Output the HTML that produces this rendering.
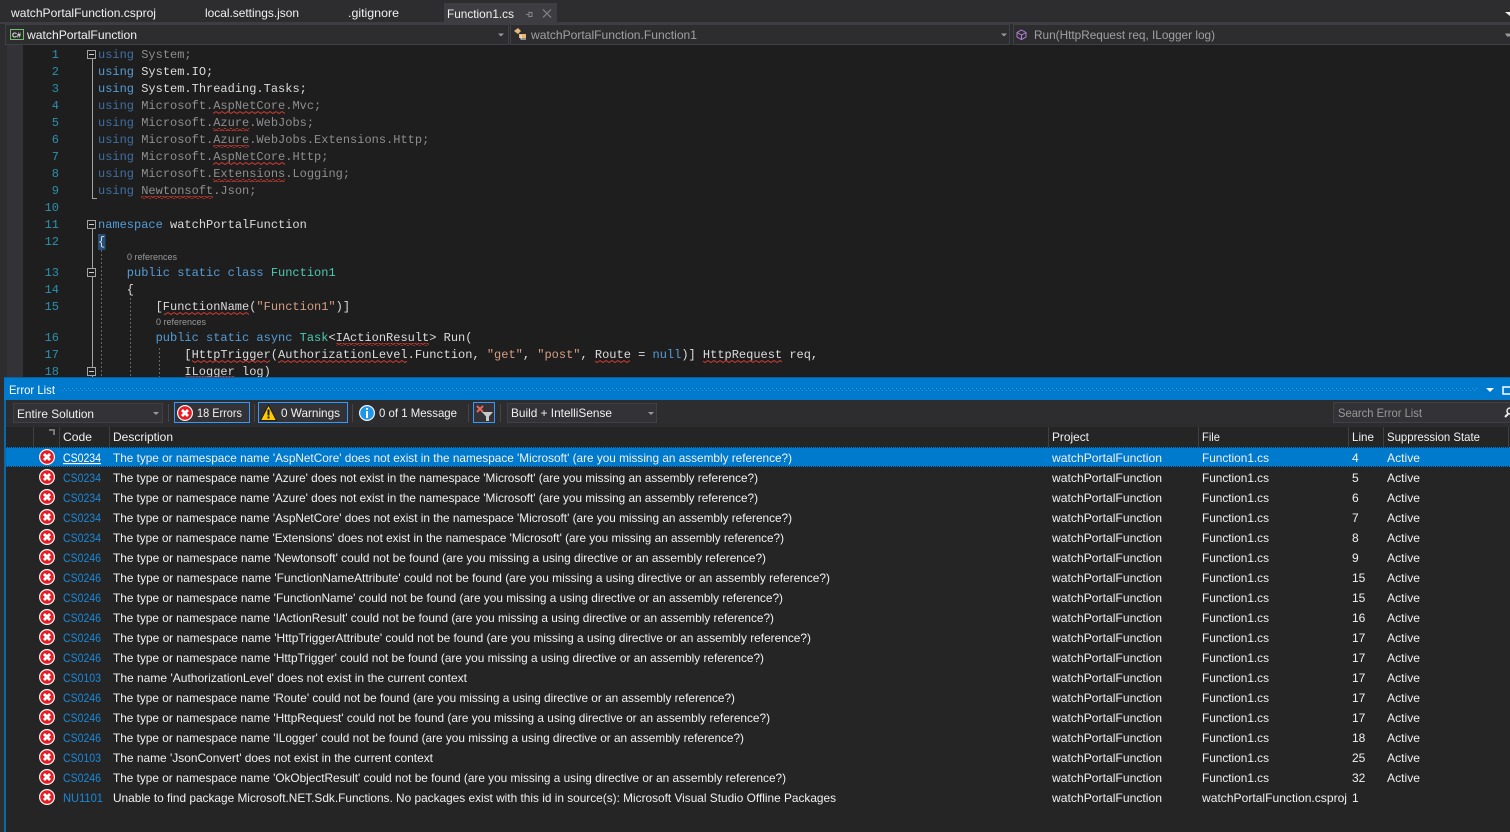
<!DOCTYPE html>
<html><head><meta charset="utf-8"><title>Error List</title>
<style>
html,body{margin:0;padding:0;width:1510px;height:832px;overflow:hidden;background:#2d2d30}
svg{display:block}
.u{font-family:"Liberation Sans",sans-serif;font-size:12px;fill:#f1f1f1}
.m{font-family:"Liberation Mono",monospace;font-size:12px;fill:#dcdcdc;white-space:pre}
.k{fill:#569cd6}.kd{fill:#3f6fa3}.g{fill:#8e8e8e}.t{fill:#4ec9b0}.s{fill:#d69d85}
.n{font-family:"Liberation Mono",monospace;font-size:12px;fill:#2b91af;text-anchor:end}
.c{font-family:"Liberation Sans",sans-serif;font-size:9px;fill:#999}
</style></head><body>
<svg width="1510" height="832" viewBox="0 0 1510 832" xmlns="http://www.w3.org/2000/svg">
<defs>
<pattern id="sq" width="6" height="3" patternUnits="userSpaceOnUse"><path d="M0 .5L3 2.500L6 .5" fill="none" stroke="#d23a30" stroke-width="1"/></pattern>
<pattern id="dots" width="4" height="4" patternUnits="userSpaceOnUse"><rect width="1" height="1" fill="#3a9ad9"/><rect x="2" y="2" width="1" height="1" fill="#3a9ad9"/></pattern>
<symbol id="e" viewBox="0 0 16 16" overflow="visible"><circle cx="8" cy="8" r="8" fill="#f6f6f6"/><circle cx="8" cy="8" r="6.800" fill="#e51c23"/><path d="M5 5L11 11M11 5L5 11" stroke="#fff" stroke-width="2.800"/></symbol>
</defs>
<rect width="1510" height="832" fill="#2d2d30"/>

<!-- tabs -->
<text class="u" x="11" y="17" textLength="145" lengthAdjust="spacingAndGlyphs">watchPortalFunction.csproj</text>
<text class="u" x="205" y="17" textLength="94" lengthAdjust="spacingAndGlyphs">local.settings.json</text>
<text class="u" x="348" y="17" textLength="51" lengthAdjust="spacingAndGlyphs">.gitignore</text>
<rect x="444" y="3" width="113" height="20" fill="#3e3e42"/>
<text class="u" x="447" y="18" textLength="67" lengthAdjust="spacingAndGlyphs">Function1.cs</text>
<path d="M526 14.500H529M529 12.500H532V16.500H529ZM529 11.500V17.500" fill="none" stroke="#85858a"/>
<path d="M543 9.500L551 17.500M551 9.500L543 17.500" stroke="#85858a" stroke-width="1.200"/>
<path d="M1505 12H1510V16Z" fill="#f1f1f1"/>
<rect x="0" y="22" width="1510" height="2" fill="#3e3e42"/>

<!-- nav bar -->
<rect x="0" y="24" width="1510" height="21" fill="#2d2d30"/>
<rect x="5.500" y="24.500" width="503" height="20" fill="#2d2d30" stroke="#3f3f46"/>
<rect x="510.500" y="24.500" width="499" height="20" fill="#2d2d30" stroke="#3f3f46"/>
<rect x="1013.500" y="24.500" width="497" height="20" fill="#2d2d30" stroke="#3f3f46"/>
<rect x="10.500" y="29.500" width="13" height="10" fill="none" stroke="#6fbf6a"/>
<text x="12" y="37.500" font-family="Liberation Sans,sans-serif" font-size="7" font-weight="bold" fill="#e8e8e8">C#</text>
<text class="u" x="27" y="39" textLength="110" lengthAdjust="spacingAndGlyphs">watchPortalFunction</text>
<path d="M498 33.500H504L501 36.500Z" fill="#999"/>
<path d="M1001 33.500H1007L1004 36.500Z" fill="#999"/>
<path d="M1505 33.500H1510V36.500H1507Z" fill="#999"/>
<path d="M514 31L518 28L521 31L518 34ZM519 34H526V38H519Z" fill="#e8b878"/>
<path d="M521 35V39H526" fill="none" stroke="#eee"/>
<text class="u" x="531" y="39" style="fill:#a0a0a0" textLength="166" lengthAdjust="spacingAndGlyphs">watchPortalFunction.Function1</text>
<path d="M1021.500 30L1026 32.500V37L1021.500 39.500L1017 37V32.500ZM1017 32.500L1021.500 35L1026 32.500M1021.500 35V39.500" fill="none" stroke="#b180d7"/>
<text class="u" x="1034" y="39" style="fill:#a0a0a0" textLength="181" lengthAdjust="spacingAndGlyphs">Run(HttpRequest req, ILogger log)</text>

<!-- editor -->
<rect x="7" y="45" width="16" height="333" fill="#333337"/>
<rect x="23" y="45" width="1487" height="333" fill="#1e1e1e"/>

<text class="n" x="59" y="58">1</text>
<text class="n" x="59" y="75">2</text>
<text class="n" x="59" y="92">3</text>
<text class="n" x="59" y="109">4</text>
<text class="n" x="59" y="126">5</text>
<text class="n" x="59" y="143">6</text>
<text class="n" x="59" y="160">7</text>
<text class="n" x="59" y="177">8</text>
<text class="n" x="59" y="194">9</text>
<text class="n" x="59" y="211">10</text>
<text class="n" x="59" y="228">11</text>
<text class="n" x="59" y="245">12</text>
<text class="n" x="59" y="276">13</text>
<text class="n" x="59" y="293">14</text>
<text class="n" x="59" y="310">15</text>
<text class="n" x="59" y="341">16</text>
<text class="n" x="59" y="358">17</text>
<text class="n" x="59" y="375">18</text>

<!-- outlining -->
<path d="M92.500 59V198.500H97M92.500 229V378" fill="none" stroke="#a5a5a5"/>
<g fill="#1e1e1e" stroke="#a5a5a5">
<rect x="87.500" y="50.500" width="8" height="8"/>
<rect x="87.500" y="220.500" width="8" height="8"/>
<rect x="87.500" y="268.500" width="8" height="8"/>
<rect x="87.500" y="367.500" width="8" height="8"/>
</g>
<path d="M89 54.500H94M89 224.500H94M89 272.500H94M89 371.500H94" stroke="#d0d0d0"/>
<path d="M101.500 250V378M130.500 298V378M159.500 348V378" stroke="#666" stroke-dasharray="2 2"/>
<rect x="98" y="234" width="7.500" height="16" fill="#264f78"/>

<!-- code -->
<text class="m" x="98" y="58"><tspan class="kd">using</tspan><tspan class="g"> System;</tspan></text>
<text class="m" x="98" y="75"><tspan class="k">using</tspan> System.IO;</text>
<text class="m" x="98" y="92"><tspan class="k">using</tspan> System.Threading.Tasks;</text>
<text class="m" x="98" y="109"><tspan class="kd">using</tspan><tspan class="g"> Microsoft.AspNetCore.Mvc;</tspan></text>
<text class="m" x="98" y="126"><tspan class="kd">using</tspan><tspan class="g"> Microsoft.Azure.WebJobs;</tspan></text>
<text class="m" x="98" y="143"><tspan class="kd">using</tspan><tspan class="g"> Microsoft.Azure.WebJobs.Extensions.Http;</tspan></text>
<text class="m" x="98" y="160"><tspan class="kd">using</tspan><tspan class="g"> Microsoft.AspNetCore.Http;</tspan></text>
<text class="m" x="98" y="177"><tspan class="kd">using</tspan><tspan class="g"> Microsoft.Extensions.Logging;</tspan></text>
<text class="m" x="98" y="194"><tspan class="kd">using</tspan><tspan class="g"> Newtonsoft.Json;</tspan></text>
<text class="m" x="98" y="228"><tspan class="k">namespace</tspan> watchPortalFunction</text>
<text class="m" x="98" y="245">{</text>
<text class="c" x="127" y="260">0 references</text>
<text class="m" x="126.800" y="276"><tspan class="k">public static class</tspan> <tspan class="t">Function1</tspan></text>
<text class="m" x="126.800" y="293">{</text>
<text class="m" x="155.600" y="310">[FunctionName(<tspan class="s">"Function1"</tspan>)]</text>
<text class="c" x="156" y="325">0 references</text>
<text class="m" x="155.600" y="341"><tspan class="k">public static async</tspan> <tspan class="t">Task</tspan>&lt;IActionResult&gt; Run(</text>
<text class="m" x="184.400" y="358">[HttpTrigger(AuthorizationLevel.Function, <tspan class="s">"get"</tspan>, <tspan class="s">"post"</tspan>, Route = <tspan class="k">null</tspan>)] HttpRequest req,</text>
<text class="m" x="184.400" y="375">ILogger log)</text>

<!-- squiggles -->
<g fill="url(#sq)">
<rect x="213" y="111" width="72" height="3"/>
<rect x="213" y="128" width="36" height="3"/>
<rect x="213" y="145" width="36" height="3"/>
<rect x="213" y="162" width="72" height="3"/>
<rect x="213" y="179" width="72" height="3"/>
<rect x="141" y="196" width="72" height="3"/>
<rect x="164" y="312" width="85" height="3"/>
<rect x="336" y="343" width="93" height="3"/>
<rect x="192" y="360" width="78" height="3"/>
<rect x="278" y="360" width="129" height="3"/>
<rect x="595" y="360" width="35" height="3"/>
<rect x="703" y="360" width="79" height="3"/>
<rect x="185" y="376" width="50" height="2"/>
</g>

<!-- error list panel -->
<rect x="4" y="377" width="1506" height="1" fill="#0b5f9c"/>
<rect x="4" y="378" width="1506" height="22" fill="#007acc"/>
<text class="u" x="9" y="394" style="fill:#fff" textLength="46" lengthAdjust="spacingAndGlyphs">Error List</text>
<rect x="62" y="387" width="1416" height="5" fill="url(#dots)"/>
<path d="M1486 388H1494L1490 392Z" fill="#fff"/>
<rect x="1503" y="387" width="8" height="7" fill="none" stroke="#fff" stroke-width="1.500"/>

<rect x="4" y="400" width="1506" height="432" fill="#252526"/>
<rect x="4" y="400" width="2" height="432" fill="#0a6aa8"/>
<rect x="6" y="400" width="1504" height="27" fill="#2d2d30"/>

<!-- toolbar -->
<rect x="13.500" y="403.500" width="149" height="19" fill="#333337" stroke="#3f3f46"/>
<text class="u" x="17" y="418" textLength="77" lengthAdjust="spacingAndGlyphs">Entire Solution</text>
<path d="M153 412H159L156 415Z" fill="#999"/>
<rect x="168" y="404" width="1" height="18" fill="#46464a"/>
<rect x="174.500" y="402.500" width="75" height="20" fill="#333337" stroke="#3399ff"/>
<use href="#e" x="177" y="405" width="16" height="16"/>
<text class="u" x="197" y="417" textLength="45" lengthAdjust="spacingAndGlyphs">18 Errors</text>
<rect x="254" y="404" width="1" height="18" fill="#46464a"/>
<rect x="258.500" y="402.500" width="89" height="20" fill="#333337" stroke="#3399ff"/>
<path d="M268.500 405L276.500 420.500H260.500Z" fill="#ffcc00" stroke="#1e1e1e"/>
<path d="M268.500 409.500V415.500M268.500 416.500V418.500" stroke="#1e1e1e" stroke-width="2"/>
<text class="u" x="281" y="417" textLength="59" lengthAdjust="spacingAndGlyphs">0 Warnings</text>
<rect x="352" y="404" width="1" height="18" fill="#46464a"/>
<circle cx="367" cy="413" r="8" fill="#f6f6f6"/><circle cx="367" cy="413" r="6.800" fill="#1c97ea"/>
<path d="M367 408V409.800M367 411V418" stroke="#fff" stroke-width="2"/>
<text class="u" x="379" y="417" textLength="78" lengthAdjust="spacingAndGlyphs">0 of 1 Message</text>
<rect x="468" y="404" width="1" height="18" fill="#46464a"/>
<rect x="473.500" y="402.500" width="21" height="20" fill="#333337" stroke="#3399ff"/>
<path d="M477 406L483 412M483 406L477 412" stroke="#e4675f" stroke-width="2"/>
<path d="M482 412H493L489 416.500V421H486V416.500Z" fill="#c8c8c8"/>
<rect x="500" y="404" width="1" height="18" fill="#46464a"/>
<rect x="507.500" y="403.500" width="149" height="19" fill="#333337" stroke="#3f3f46"/>
<text class="u" x="511" y="417" textLength="101" lengthAdjust="spacingAndGlyphs">Build + IntelliSense</text>
<path d="M648 412H654L651 415Z" fill="#999"/>
<rect x="1333.500" y="402.500" width="177" height="20" fill="#333337" stroke="#3f3f46"/>
<text class="u" x="1338" y="417" style="fill:#999" textLength="84" lengthAdjust="spacingAndGlyphs">Search Error List</text>
<circle cx="1510" cy="411" r="3" fill="none" stroke="#eee" stroke-width="1.500"/>
<path d="M1508 414L1505 417" stroke="#eee" stroke-width="2"/>

<!-- column header -->
<rect x="6" y="427" width="1504" height="20" fill="#252526"/>
<path d="M33.500 427V447M59.500 427V447M109.500 427V447M1048.500 427V447M1198.500 427V447M1348.500 427V447M1383.500 427V447M1508.500 427V447" stroke="#3f3f46"/>
<path d="M49 429H55V435H53V431H49Z" fill="#777"/>
<text class="u" x="63" y="441" textLength="29" lengthAdjust="spacingAndGlyphs">Code</text>
<text class="u" x="113" y="441" textLength="60" lengthAdjust="spacingAndGlyphs">Description</text>
<text class="u" x="1052" y="441" textLength="37" lengthAdjust="spacingAndGlyphs">Project</text>
<text class="u" x="1202" y="441" textLength="18" lengthAdjust="spacingAndGlyphs">File</text>
<text class="u" x="1352" y="441" textLength="22" lengthAdjust="spacingAndGlyphs">Line</text>
<text class="u" x="1387" y="441" textLength="93" lengthAdjust="spacingAndGlyphs">Suppression State</text>

<!-- selected row -->
<rect x="6" y="447" width="1504" height="20" fill="#007acc"/>
<path d="M6 447.500H1510M6 466.500H1510" stroke="#0b2f4a" stroke-dasharray="1 1"/>

<!-- icons -->
<use href="#e" x="39" y="449" width="16" height="16"/>
<use href="#e" x="39" y="469" width="16" height="16"/>
<use href="#e" x="39" y="489" width="16" height="16"/>
<use href="#e" x="39" y="509" width="16" height="16"/>
<use href="#e" x="39" y="529" width="16" height="16"/>
<use href="#e" x="39" y="549" width="16" height="16"/>
<use href="#e" x="39" y="569" width="16" height="16"/>
<use href="#e" x="39" y="589" width="16" height="16"/>
<use href="#e" x="39" y="609" width="16" height="16"/>
<use href="#e" x="39" y="629" width="16" height="16"/>
<use href="#e" x="39" y="649" width="16" height="16"/>
<use href="#e" x="39" y="669" width="16" height="16"/>
<use href="#e" x="39" y="689" width="16" height="16"/>
<use href="#e" x="39" y="709" width="16" height="16"/>
<use href="#e" x="39" y="729" width="16" height="16"/>
<use href="#e" x="39" y="749" width="16" height="16"/>
<use href="#e" x="39" y="769" width="16" height="16"/>
<use href="#e" x="39" y="789" width="16" height="16"/>

<!-- codes -->
<text class="u" x="63" y="462" style="fill:#fff;text-decoration:underline" textLength="38" lengthAdjust="spacingAndGlyphs">CS0234</text>
<text class="u" x="63" y="482" textLength="38" lengthAdjust="spacingAndGlyphs" style="fill:#1a88d8">CS0234</text>
<text class="u" x="63" y="502" textLength="38" lengthAdjust="spacingAndGlyphs" style="fill:#1a88d8">CS0234</text>
<text class="u" x="63" y="522" textLength="38" lengthAdjust="spacingAndGlyphs" style="fill:#1a88d8">CS0234</text>
<text class="u" x="63" y="542" textLength="38" lengthAdjust="spacingAndGlyphs" style="fill:#1a88d8">CS0234</text>
<text class="u" x="63" y="562" textLength="38" lengthAdjust="spacingAndGlyphs" style="fill:#1a88d8">CS0246</text>
<text class="u" x="63" y="582" textLength="38" lengthAdjust="spacingAndGlyphs" style="fill:#1a88d8">CS0246</text>
<text class="u" x="63" y="602" textLength="38" lengthAdjust="spacingAndGlyphs" style="fill:#1a88d8">CS0246</text>
<text class="u" x="63" y="622" textLength="38" lengthAdjust="spacingAndGlyphs" style="fill:#1a88d8">CS0246</text>
<text class="u" x="63" y="642" textLength="38" lengthAdjust="spacingAndGlyphs" style="fill:#1a88d8">CS0246</text>
<text class="u" x="63" y="662" textLength="38" lengthAdjust="spacingAndGlyphs" style="fill:#1a88d8">CS0246</text>
<text class="u" x="63" y="682" textLength="38" lengthAdjust="spacingAndGlyphs" style="fill:#1a88d8">CS0103</text>
<text class="u" x="63" y="702" textLength="38" lengthAdjust="spacingAndGlyphs" style="fill:#1a88d8">CS0246</text>
<text class="u" x="63" y="722" textLength="38" lengthAdjust="spacingAndGlyphs" style="fill:#1a88d8">CS0246</text>
<text class="u" x="63" y="742" textLength="38" lengthAdjust="spacingAndGlyphs" style="fill:#1a88d8">CS0246</text>
<text class="u" x="63" y="762" textLength="38" lengthAdjust="spacingAndGlyphs" style="fill:#1a88d8">CS0103</text>
<text class="u" x="63" y="782" textLength="38" lengthAdjust="spacingAndGlyphs" style="fill:#1a88d8">CS0246</text>
<text class="u" x="63" y="802" textLength="40" lengthAdjust="spacingAndGlyphs" style="fill:#1a88d8">NU1101</text>

<!-- descriptions -->
<text class="u" x="113" y="462" textLength="679" lengthAdjust="spacingAndGlyphs">The type or namespace name 'AspNetCore' does not exist in the namespace 'Microsoft' (are you missing an assembly reference?)</text>
<text class="u" x="113" y="482" textLength="645" lengthAdjust="spacingAndGlyphs">The type or namespace name 'Azure' does not exist in the namespace 'Microsoft' (are you missing an assembly reference?)</text>
<text class="u" x="113" y="502" textLength="645" lengthAdjust="spacingAndGlyphs">The type or namespace name 'Azure' does not exist in the namespace 'Microsoft' (are you missing an assembly reference?)</text>
<text class="u" x="113" y="522" textLength="679" lengthAdjust="spacingAndGlyphs">The type or namespace name 'AspNetCore' does not exist in the namespace 'Microsoft' (are you missing an assembly reference?)</text>
<text class="u" x="113" y="542" textLength="671" lengthAdjust="spacingAndGlyphs">The type or namespace name 'Extensions' does not exist in the namespace 'Microsoft' (are you missing an assembly reference?)</text>
<text class="u" x="113" y="562" textLength="653" lengthAdjust="spacingAndGlyphs">The type or namespace name 'Newtonsoft' could not be found (are you missing a using directive or an assembly reference?)</text>
<text class="u" x="113" y="582" textLength="717" lengthAdjust="spacingAndGlyphs">The type or namespace name 'FunctionNameAttribute' could not be found (are you missing a using directive or an assembly reference?)</text>
<text class="u" x="113" y="602" textLength="670" lengthAdjust="spacingAndGlyphs">The type or namespace name 'FunctionName' could not be found (are you missing a using directive or an assembly reference?)</text>
<text class="u" x="113" y="622" textLength="661" lengthAdjust="spacingAndGlyphs">The type or namespace name 'IActionResult' could not be found (are you missing a using directive or an assembly reference?)</text>
<text class="u" x="113" y="642" textLength="698" lengthAdjust="spacingAndGlyphs">The type or namespace name 'HttpTriggerAttribute' could not be found (are you missing a using directive or an assembly reference?)</text>
<text class="u" x="113" y="662" textLength="651" lengthAdjust="spacingAndGlyphs">The type or namespace name 'HttpTrigger' could not be found (are you missing a using directive or an assembly reference?)</text>
<text class="u" x="113" y="682" textLength="354" lengthAdjust="spacingAndGlyphs">The name 'AuthorizationLevel' does not exist in the current context</text>
<text class="u" x="113" y="702" textLength="622" lengthAdjust="spacingAndGlyphs">The type or namespace name 'Route' could not be found (are you missing a using directive or an assembly reference?)</text>
<text class="u" x="113" y="722" textLength="657" lengthAdjust="spacingAndGlyphs">The type or namespace name 'HttpRequest' could not be found (are you missing a using directive or an assembly reference?)</text>
<text class="u" x="113" y="742" textLength="631" lengthAdjust="spacingAndGlyphs">The type or namespace name 'ILogger' could not be found (are you missing a using directive or an assembly reference?)</text>
<text class="u" x="113" y="762" textLength="320" lengthAdjust="spacingAndGlyphs">The name 'JsonConvert' does not exist in the current context</text>
<text class="u" x="113" y="782" textLength="673" lengthAdjust="spacingAndGlyphs">The type or namespace name 'OkObjectResult' could not be found (are you missing a using directive or an assembly reference?)</text>
<text class="u" x="113" y="802" textLength="723" lengthAdjust="spacingAndGlyphs">Unable to find package Microsoft.NET.Sdk.Functions. No packages exist with this id in source(s): Microsoft Visual Studio Offline Packages</text>

<!-- project -->
<text class="u" x="1052" y="462" textLength="110" lengthAdjust="spacingAndGlyphs">watchPortalFunction</text>
<text class="u" x="1052" y="482" textLength="110" lengthAdjust="spacingAndGlyphs">watchPortalFunction</text>
<text class="u" x="1052" y="502" textLength="110" lengthAdjust="spacingAndGlyphs">watchPortalFunction</text>
<text class="u" x="1052" y="522" textLength="110" lengthAdjust="spacingAndGlyphs">watchPortalFunction</text>
<text class="u" x="1052" y="542" textLength="110" lengthAdjust="spacingAndGlyphs">watchPortalFunction</text>
<text class="u" x="1052" y="562" textLength="110" lengthAdjust="spacingAndGlyphs">watchPortalFunction</text>
<text class="u" x="1052" y="582" textLength="110" lengthAdjust="spacingAndGlyphs">watchPortalFunction</text>
<text class="u" x="1052" y="602" textLength="110" lengthAdjust="spacingAndGlyphs">watchPortalFunction</text>
<text class="u" x="1052" y="622" textLength="110" lengthAdjust="spacingAndGlyphs">watchPortalFunction</text>
<text class="u" x="1052" y="642" textLength="110" lengthAdjust="spacingAndGlyphs">watchPortalFunction</text>
<text class="u" x="1052" y="662" textLength="110" lengthAdjust="spacingAndGlyphs">watchPortalFunction</text>
<text class="u" x="1052" y="682" textLength="110" lengthAdjust="spacingAndGlyphs">watchPortalFunction</text>
<text class="u" x="1052" y="702" textLength="110" lengthAdjust="spacingAndGlyphs">watchPortalFunction</text>
<text class="u" x="1052" y="722" textLength="110" lengthAdjust="spacingAndGlyphs">watchPortalFunction</text>
<text class="u" x="1052" y="742" textLength="110" lengthAdjust="spacingAndGlyphs">watchPortalFunction</text>
<text class="u" x="1052" y="762" textLength="110" lengthAdjust="spacingAndGlyphs">watchPortalFunction</text>
<text class="u" x="1052" y="782" textLength="110" lengthAdjust="spacingAndGlyphs">watchPortalFunction</text>
<text class="u" x="1052" y="802" textLength="110" lengthAdjust="spacingAndGlyphs">watchPortalFunction</text>

<!-- file -->
<text class="u" x="1202" y="462" textLength="67" lengthAdjust="spacingAndGlyphs">Function1.cs</text>
<text class="u" x="1202" y="482" textLength="67" lengthAdjust="spacingAndGlyphs">Function1.cs</text>
<text class="u" x="1202" y="502" textLength="67" lengthAdjust="spacingAndGlyphs">Function1.cs</text>
<text class="u" x="1202" y="522" textLength="67" lengthAdjust="spacingAndGlyphs">Function1.cs</text>
<text class="u" x="1202" y="542" textLength="67" lengthAdjust="spacingAndGlyphs">Function1.cs</text>
<text class="u" x="1202" y="562" textLength="67" lengthAdjust="spacingAndGlyphs">Function1.cs</text>
<text class="u" x="1202" y="582" textLength="67" lengthAdjust="spacingAndGlyphs">Function1.cs</text>
<text class="u" x="1202" y="602" textLength="67" lengthAdjust="spacingAndGlyphs">Function1.cs</text>
<text class="u" x="1202" y="622" textLength="67" lengthAdjust="spacingAndGlyphs">Function1.cs</text>
<text class="u" x="1202" y="642" textLength="67" lengthAdjust="spacingAndGlyphs">Function1.cs</text>
<text class="u" x="1202" y="662" textLength="67" lengthAdjust="spacingAndGlyphs">Function1.cs</text>
<text class="u" x="1202" y="682" textLength="67" lengthAdjust="spacingAndGlyphs">Function1.cs</text>
<text class="u" x="1202" y="702" textLength="67" lengthAdjust="spacingAndGlyphs">Function1.cs</text>
<text class="u" x="1202" y="722" textLength="67" lengthAdjust="spacingAndGlyphs">Function1.cs</text>
<text class="u" x="1202" y="742" textLength="67" lengthAdjust="spacingAndGlyphs">Function1.cs</text>
<text class="u" x="1202" y="762" textLength="67" lengthAdjust="spacingAndGlyphs">Function1.cs</text>
<text class="u" x="1202" y="782" textLength="67" lengthAdjust="spacingAndGlyphs">Function1.cs</text>
<text class="u" x="1202" y="802" textLength="145" lengthAdjust="spacingAndGlyphs">watchPortalFunction.csproj</text>

<!-- line -->
<text class="u" x="1352" y="462">4</text>
<text class="u" x="1352" y="482">5</text>
<text class="u" x="1352" y="502">6</text>
<text class="u" x="1352" y="522">7</text>
<text class="u" x="1352" y="542">8</text>
<text class="u" x="1352" y="562">9</text>
<text class="u" x="1352" y="582">15</text>
<text class="u" x="1352" y="602">15</text>
<text class="u" x="1352" y="622">16</text>
<text class="u" x="1352" y="642">17</text>
<text class="u" x="1352" y="662">17</text>
<text class="u" x="1352" y="682">17</text>
<text class="u" x="1352" y="702">17</text>
<text class="u" x="1352" y="722">17</text>
<text class="u" x="1352" y="742">18</text>
<text class="u" x="1352" y="762">25</text>
<text class="u" x="1352" y="782">32</text>
<text class="u" x="1352" y="802">1</text>

<!-- state -->
<text class="u" x="1387" y="462" textLength="33" lengthAdjust="spacingAndGlyphs">Active</text>
<text class="u" x="1387" y="482" textLength="33" lengthAdjust="spacingAndGlyphs">Active</text>
<text class="u" x="1387" y="502" textLength="33" lengthAdjust="spacingAndGlyphs">Active</text>
<text class="u" x="1387" y="522" textLength="33" lengthAdjust="spacingAndGlyphs">Active</text>
<text class="u" x="1387" y="542" textLength="33" lengthAdjust="spacingAndGlyphs">Active</text>
<text class="u" x="1387" y="562" textLength="33" lengthAdjust="spacingAndGlyphs">Active</text>
<text class="u" x="1387" y="582" textLength="33" lengthAdjust="spacingAndGlyphs">Active</text>
<text class="u" x="1387" y="602" textLength="33" lengthAdjust="spacingAndGlyphs">Active</text>
<text class="u" x="1387" y="622" textLength="33" lengthAdjust="spacingAndGlyphs">Active</text>
<text class="u" x="1387" y="642" textLength="33" lengthAdjust="spacingAndGlyphs">Active</text>
<text class="u" x="1387" y="662" textLength="33" lengthAdjust="spacingAndGlyphs">Active</text>
<text class="u" x="1387" y="682" textLength="33" lengthAdjust="spacingAndGlyphs">Active</text>
<text class="u" x="1387" y="702" textLength="33" lengthAdjust="spacingAndGlyphs">Active</text>
<text class="u" x="1387" y="722" textLength="33" lengthAdjust="spacingAndGlyphs">Active</text>
<text class="u" x="1387" y="742" textLength="33" lengthAdjust="spacingAndGlyphs">Active</text>
<text class="u" x="1387" y="762" textLength="33" lengthAdjust="spacingAndGlyphs">Active</text>
<text class="u" x="1387" y="782" textLength="33" lengthAdjust="spacingAndGlyphs">Active</text>
</svg>
</body></html>
